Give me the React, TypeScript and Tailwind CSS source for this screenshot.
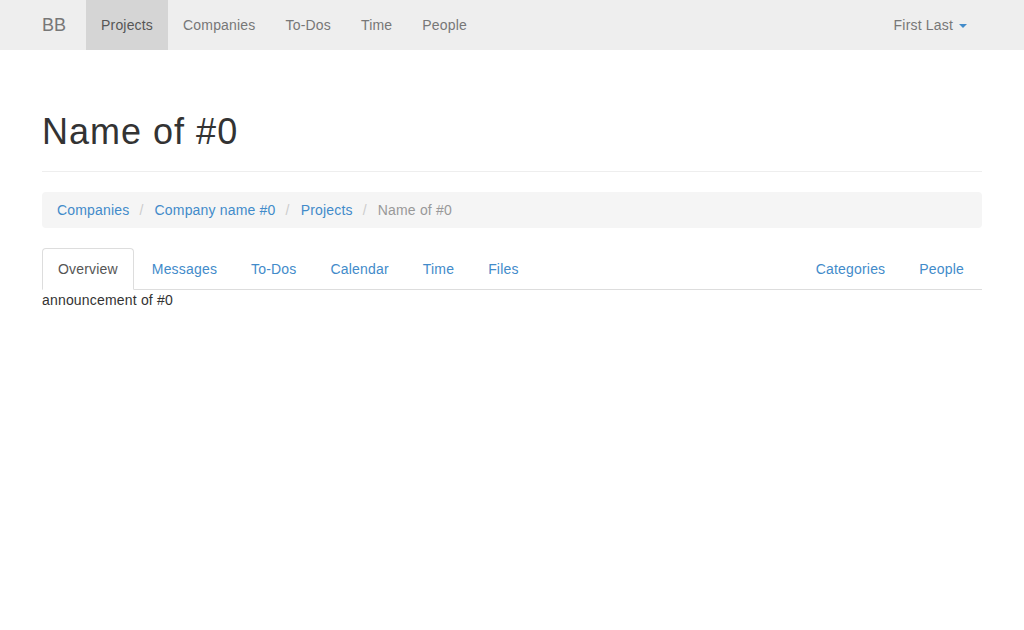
const topLinks = ['Projects', 'Companies', 'To-Dos', 'Time', 'People'];
const leftTabs = ['Overview', 'Messages', 'To-Dos', 'Calendar', 'Time', 'Files'];
const rightTabs = ['Categories', 'People'];

const crumbs = [
  { label: 'Companies', link: true },
  { label: 'Company name #0', link: true },
  { label: 'Projects', link: true },
  { label: 'Name of #0', link: false },
];

export default function App() {
  return (
    <div className="min-h-[630px] bg-white text-[14px] leading-[20px] tracking-[0.013em] text-[#333] font-['Liberation_Sans',Arial,sans-serif]">
      {/* Top navbar */}
      <nav className="h-[50px] bg-[#eeeeee]">
        <div className="mx-auto flex h-full w-[970px] items-stretch justify-between">
          <div className="flex">
            <a className="flex items-center pl-[15px] pr-[20px] text-[18px] tracking-normal text-[#777]">BB</a>
            <ul className="flex">
              {topLinks.map((l, i) => (
                <li key={l}>
                  <a
                    className={
                      i === 0
                        ? 'block px-[15px] py-[15px] bg-[#d5d5d5] text-[#555]'
                        : 'block px-[15px] py-[15px] text-[#777]'
                    }
                  >
                    {l}
                  </a>
                </li>
              ))}
            </ul>
          </div>
          <a className="mr-[15px] flex items-center px-[15px] text-[#777]">
            First Last
            <span className="ml-[6px] mt-[2px] inline-block h-0 w-0 border-x-[4px] border-t-[4px] border-x-transparent border-t-[#428bca]" />
          </a>
        </div>
      </nav>

      <div className="mx-auto w-[970px] px-[15px]">
        {/* Page header */}
        <div className="mt-[62px] border-b border-[#eee] pb-[9px]">
          <h1 className="mb-[10px] text-[36px] leading-[39.6px] tracking-[0.028em] font-normal text-[#333]">Name of #0</h1>
        </div>

        {/* Breadcrumb */}
        <ol className="mt-[20px] mb-[20px] flex rounded-[4px] bg-[#f5f5f5] px-[15px] py-[8px]">
          {crumbs.map((c, i) => (
            <li key={c.label} className="flex">
              {i > 0 && <span className="pl-[10px] pr-[11px] text-[#ccc]">/</span>}
              <span className={c.link ? 'text-[#428bca]' : 'text-[#999]'}>{c.label}</span>
            </li>
          ))}
        </ol>

        {/* Tabs */}
        <div className="flex justify-between border-b border-[#ddd]">
          <ul className="flex">
            {leftTabs.map((t, i) => (
              <li key={t} className="-mb-px mr-[2px]">
                <a
                  className={
                    i === 0
                      ? 'block rounded-t-[4px] border border-[#ddd] border-b-white bg-white px-[15px] py-[10px] text-[#555]'
                      : 'block border border-transparent px-[15px] py-[10px] text-[#428bca]'
                  }
                >
                  {t}
                </a>
              </li>
            ))}
          </ul>
          <ul className="flex">
            {rightTabs.map((t) => (
              <li key={t} className="-mb-px mr-[2px]">
                <a className="block border border-transparent px-[15px] py-[10px] text-[#428bca]">{t}</a>
              </li>
            ))}
          </ul>
        </div>

        <div>announcement of #0</div>
      </div>
    </div>
  );
}
